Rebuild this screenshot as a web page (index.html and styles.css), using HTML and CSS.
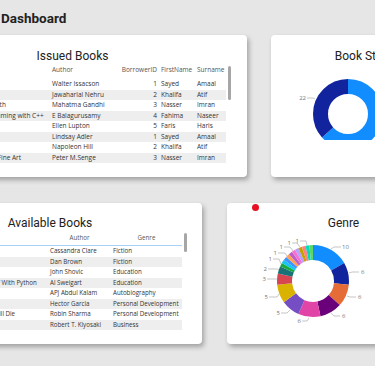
FILE: index.html
```html
<!DOCTYPE html>
<html lang="en">
<head>
  <meta charset="UTF-8">
  <title>Library Dashboard</title>
  <link rel="stylesheet" href="styles.css">
</head>
<body>
  <h1 class="page-title">Dashboard</h1>

  <div class="board">
    <div class="row">
      <section class="card card-issued">
        <h2 class="card-title">Issued Books</h2>
        <div class="table-wrap">
          <table class="grid issued">
            <colgroup>
              <col class="w-title"><col class="w-author"><col class="w-id"><col class="w-first"><col class="w-last">
            </colgroup>
            <thead>
              <tr><th>Title</th><th>Author</th><th class="num">BorrowerID</th><th>FirstName</th><th>Surname</th></tr>
            </thead>
            <tbody>
              <tr><td>Steve Jobs</td><td>Walter Issacson</td><td class="num">1</td><td>Sayed</td><td>Amaal</td></tr>
              <tr><td>The Discovery of India</td><td>Jawaharlal Nehru</td><td class="num">2</td><td>Khalifa</td><td>Atif</td></tr>
              <tr><td>My Experiments with Truth</td><td>Mahatma Gandhi</td><td class="num">3</td><td>Nasser</td><td>Imran</td></tr>
              <tr><td>Object Oriented Programming with C++</td><td>E Balagurusamy</td><td class="num">4</td><td>Fahima</td><td>Naseer</td></tr>
              <tr><td>Thinking with Type</td><td>Ellen Lupton</td><td class="num">5</td><td>Faris</td><td>Haris</td></tr>
              <tr><td>Creative 52</td><td>Lindsay Adler</td><td class="num">1</td><td>Sayed</td><td>Amaal</td></tr>
              <tr><td>Think and Grow Rich</td><td>Napoleon Hill</td><td class="num">2</td><td>Khalifa</td><td>Atif</td></tr>
              <tr><td>The Fifth Discipline: The Fine Art</td><td>Peter M.Senge</td><td class="num">3</td><td>Nasser</td><td>Imran</td></tr>
            </tbody>
          </table>
          <div class="scrollbar sb-issued"></div>
        </div>
      </section>

      <section class="card card-status">
        <h2 class="card-title">Book Status</h2>
        <svg class="chart" width="192" height="76" viewBox="0 0 192 76">
          <g transform="rotate(-90 77 50)" fill="none" stroke-width="15">
            <circle cx="77" cy="50" r="27.5" pathLength="60" stroke="#118DFF" stroke-dasharray="38 60" stroke-dashoffset="0"/>
            <circle cx="77" cy="50" r="27.5" pathLength="60" stroke="#12239E" stroke-dasharray="22 60" stroke-dashoffset="-38"/>
          </g>
          <g class="leader">
            <polyline points="44,35 42,34 36,34"/>
            <polyline points="110,65 113,67 119,67"/>
          </g>
          <g class="label">
            <text x="35" y="36" text-anchor="end">22</text>
            <text x="121" y="69">38</text>
          </g>
        </svg>
      </section>
    </div>

    <div class="row row-bottom">
      <section class="card card-available">
        <h2 class="card-title">Available Books</h2>
        <div class="table-wrap">
          <table class="grid available">
            <colgroup>
              <col class="w-title2"><col class="w-author2"><col class="w-genre">
            </colgroup>
            <thead>
              <tr><th>Title</th><th>Author</th><th>Genre</th></tr>
            </thead>
            <tbody>
              <tr><td>City of Bones</td><td>Cassandra Clare</td><td>Fiction</td></tr>
              <tr><td>Inferno</td><td>Dan Brown</td><td>Fiction</td></tr>
              <tr><td>Python Programming</td><td>John Shovic</td><td>Education</td></tr>
              <tr><td>Automate the Boring Stuff With Python</td><td>Al Sweigart</td><td>Education</td></tr>
              <tr><td>Wings of Fire</td><td>APJ Abdul Kalam</td><td>Autobiography</td></tr>
              <tr><td>Ikigai</td><td>Hector Garcia</td><td>Personal Development</td></tr>
              <tr><td>Who Will Cry When You Will Die</td><td>Robin Sharma</td><td>Personal Development</td></tr>
              <tr><td>Rich Dad Poor Dad</td><td>Robert T. Kiyosaki</td><td>Business</td></tr>
            </tbody>
          </table>
          <div class="scrollbar sb-available"></div>
        </div>
      </section>

      <section class="card card-genre">
        <span class="rec-dot"></span>
        <h2 class="card-title">Genre</h2>
        <svg class="chart" width="233" height="100" viewBox="0 0 233 100">
          <g transform="rotate(-90 86 50)" fill="none" stroke-width="15">
            <circle cx="86" cy="50" r="28.5" pathLength="60" stroke="#118DFF" stroke-dasharray="10 60" stroke-dashoffset="0"/>
            <circle cx="86" cy="50" r="28.5" pathLength="60" stroke="#12239E" stroke-dasharray="6 60" stroke-dashoffset="-10"/>
            <circle cx="86" cy="50" r="28.5" pathLength="60" stroke="#E66C37" stroke-dasharray="6 60" stroke-dashoffset="-16"/>
            <circle cx="86" cy="50" r="28.5" pathLength="60" stroke="#6B007B" stroke-dasharray="6 60" stroke-dashoffset="-22"/>
            <circle cx="86" cy="50" r="28.5" pathLength="60" stroke="#E044A7" stroke-dasharray="6 60" stroke-dashoffset="-28"/>
            <circle cx="86" cy="50" r="28.5" pathLength="60" stroke="#744EC2" stroke-dasharray="5 60" stroke-dashoffset="-34"/>
            <circle cx="86" cy="50" r="28.5" pathLength="60" stroke="#D9B300" stroke-dasharray="5 60" stroke-dashoffset="-39"/>
            <circle cx="86" cy="50" r="28.5" pathLength="60" stroke="#D64550" stroke-dasharray="3 60" stroke-dashoffset="-44"/>
            <circle cx="86" cy="50" r="28.5" pathLength="60" stroke="#197278" stroke-dasharray="2 60" stroke-dashoffset="-47"/>
            <circle cx="86" cy="50" r="28.5" pathLength="60" stroke="#1AAB40" stroke-dasharray="1 60" stroke-dashoffset="-49"/>
            <circle cx="86" cy="50" r="28.5" pathLength="60" stroke="#15C6F4" stroke-dasharray="1 60" stroke-dashoffset="-50"/>
            <circle cx="86" cy="50" r="28.5" pathLength="60" stroke="#4092FF" stroke-dasharray="1 60" stroke-dashoffset="-51"/>
            <circle cx="86" cy="50" r="28.5" pathLength="60" stroke="#FFA058" stroke-dasharray="1 60" stroke-dashoffset="-52"/>
            <circle cx="86" cy="50" r="28.5" pathLength="60" stroke="#BE5DC9" stroke-dasharray="1 60" stroke-dashoffset="-53"/>
            <circle cx="86" cy="50" r="28.5" pathLength="60" stroke="#F472D0" stroke-dasharray="1 60" stroke-dashoffset="-54"/>
            <circle cx="86" cy="50" r="28.5" pathLength="60" stroke="#B5A1FF" stroke-dasharray="1 60" stroke-dashoffset="-55"/>
            <circle cx="86" cy="50" r="28.5" pathLength="60" stroke="#C4A200" stroke-dasharray="1 60" stroke-dashoffset="-56"/>
            <circle cx="86" cy="50" r="28.5" pathLength="60" stroke="#FF8080" stroke-dasharray="1 60" stroke-dashoffset="-57"/>
            <circle cx="86" cy="50" r="28.5" pathLength="60" stroke="#00DBBC" stroke-dasharray="1 60" stroke-dashoffset="-58"/>
            <circle cx="86" cy="50" r="28.5" pathLength="60" stroke="#5BD667" stroke-dasharray="1 60" stroke-dashoffset="-59"/>
          </g>
          <g class="leader">
            <polyline points="104,18 107,16 114,16"/>
            <polyline points="122,42 125,41 132,41"/>
            <polyline points="120,65 123,66 129,66"/>
            <polyline points="104,82 107,85 113,85"/>
            <polyline points="82,87 80,90 75,90"/>
            <polyline points="63,79 60,82 54,82"/>
            <polyline points="52,63 50,66 42,66"/>
            <polyline points="50,48 40,48"/>
            <polyline points="52,39 50,38 41,38"/>
            <polyline points="54,33 52,28 46,28"/>
            <polyline points="60,25 58,22 51,22"/>
            <polyline points="66,20 63,16 57,16"/>
            <polyline points="73,16 70,12 65,12"/>
            <polyline points="80,14 79,10 73,10"/>
          </g>
          <g class="label">
            <text x="115" y="18">10</text>
            <text x="134" y="43">6</text>
            <text x="131" y="68">6</text>
            <text x="115" y="87">6</text>
            <text x="74" y="92" text-anchor="end">6</text>
            <text x="53" y="84" text-anchor="end">5</text>
            <text x="41" y="68" text-anchor="end">5</text>
            <text x="39" y="50" text-anchor="end">3</text>
            <text x="40" y="40" text-anchor="end">2</text>
            <text x="45" y="30" text-anchor="end">1</text>
            <text x="50" y="24" text-anchor="end">1</text>
            <text x="56" y="18" text-anchor="end">1</text>
            <text x="64" y="14" text-anchor="end">1</text>
            <text x="72" y="12" text-anchor="end">1</text>
          </g>
        </svg>
      </section>
    </div>
  </div>
</body>
</html>
```

FILE: styles.css
```css
body {
  margin: 0;
  width: 375px;
  height: 366px;
  overflow: hidden;
  background-color: #e6e6e6;
  color: #333;
  font-family: "Open Sans", sans-serif;
}

.page-title {
  margin: 0;
  padding: 9px 0 0 1px;
  font: bold 13.5px/18px Roboto, sans-serif;
  color: #222;
}

.board {
  margin: 8px 0 0 -102px;
  display: flex;
  flex-direction: column;
  gap: 26px;
}
.row { display: flex; gap: 24px; }
.row.row-bottom { gap: 25px; }

.card {
  position: relative;
  flex: none;
  background: #fff;
  border-radius: 4px;
  box-shadow: 2px 3px 5px rgba(0, 0, 0, 0.3);
}
.card-issued { width: 349px; height: 142px; }
.card-status { width: 192px; height: 142px; }
.card-available { width: 304px; height: 141px; }
.card-genre { width: 233px; height: 141px; }

.card-title {
  margin: 0;
  padding-top: 13px;
  font: 400 12px/16px Roboto, sans-serif;
  color: #222;
  text-align: center;
}
.card-available .card-title,
.card-genre .card-title { padding-top: 12px; }

.table-wrap { display: flex; align-items: flex-start; gap: 2px; }
.card-issued .table-wrap { margin-left: 24.2px; }
.card-available .table-wrap { margin-left: 24.6px; }

.grid {
  table-layout: fixed;
  border-collapse: collapse;
  white-space: nowrap;
}
.grid th,
.grid td {
  padding: 0 2px;
  text-align: left;
}
.grid th { font-weight: 400; color: #555; vertical-align: top; }
.grid td { height: 10.5px; line-height: 10.5px; color: #333; }
.grid tbody tr:nth-child(even) { background: #eeeeee; }
.grid .num { text-align: right; }

.issued { width: 303.8px; font-size: 6.5px; }
.issued th { height: 15px; line-height: 12px; }
.w-title { width: 127.8px; }
.w-author { width: 68px; }
.w-id { width: 41px; }
.w-first { width: 36px; }
.w-last { width: 31px; }

.available { width: 259.4px; font-size: 6.2px; }
.available th {
  height: 14px;
  line-height: 14px;
  text-align: center;
  border-bottom: 1px solid #a9d0f5;
}
.w-title2 { width: 125.4px; }
.w-author2 { width: 63px; }
.w-genre { width: 71px; }

.scrollbar { width: 3px; border-radius: 2px; background: #a6a6a6; }
.sb-issued { margin-top: 2px; height: 34px; }
.sb-available { margin-top: 2px; height: 19px; }

.chart { display: block; }
.leader polyline { fill: none; stroke: #a0a0a0; stroke-width: 0.6; }
.label text { font: 6px "Open Sans", sans-serif; fill: #777; }

.rec-dot {
  position: absolute;
  left: 25px;
  top: 1px;
  width: 7px;
  height: 7px;
  border-radius: 50%;
  background: #e81123;
}
```
